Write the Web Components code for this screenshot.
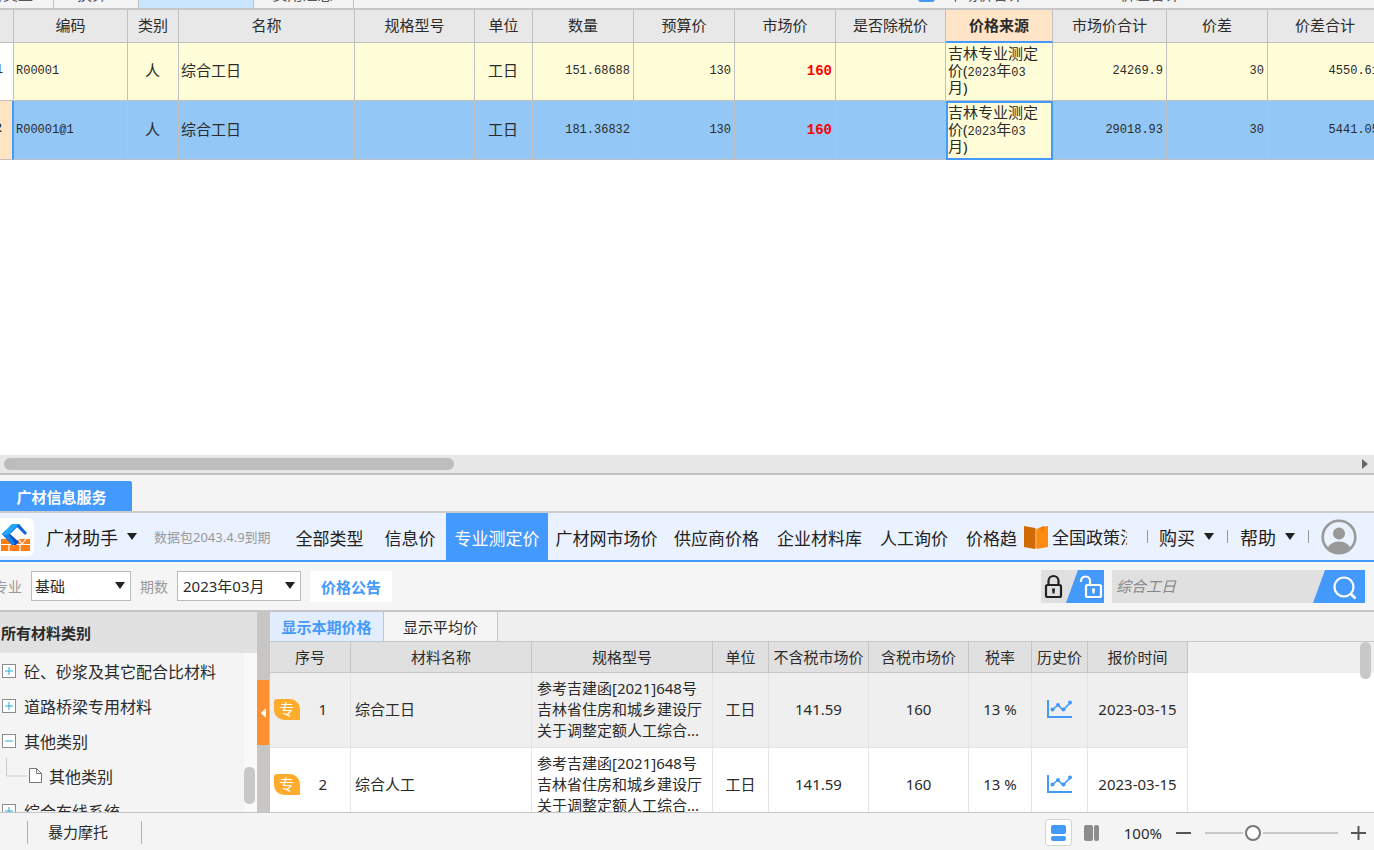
<!DOCTYPE html>
<html lang="zh-CN">
<head>
<meta charset="utf-8">
<title>广材信息服务</title>
<style>
html,body{height:100%;margin:0}
body{font-family:"Noto Sans","Noto Sans CJK SC",sans-serif;font-size:15px;color:#2b2b2b;background:#f4f4f4;overflow:hidden}
</style>
</head>
<body>
<cost-app></cost-app>
<script>
const BASE = `*{box-sizing:border-box}
button,input,select{font-family:inherit;font-size:inherit;color:inherit;margin:0}
button{border:0;background:none;padding:0;cursor:pointer}`;

function define(name, css, html) {
  customElements.define(name, class extends HTMLElement {
    constructor() {
      super();
      const t = document.createElement('template');
      t.innerHTML = `<style>${BASE}${css}</style>${typeof html === 'function' ? html(this) : html}`;
      this.attachShadow({ mode: 'open' }).appendChild(t.content.cloneNode(true));
    }
  });
}

/* Small downward triangle */
define('drop-arrow', `:host{display:block;width:0;height:0;border:5px solid transparent;border-top:7px solid #222;border-bottom:0}`, '');

/* Upper tab strip, scrolled so that only its lower edge shows */
define('sheet-tabs', `
:host{display:flex;flex:none;height:10px;overflow:hidden;background:#f3f3f3;border-bottom:2px solid #c6c6c6;align-items:flex-end;line-height:16px;color:#555;white-space:nowrap}
.tab{height:24px;flex:none;border-right:1px solid #c2c2c2;text-align:center;padding-top:2px}
.tab.on{background:#cae6ff}
.a{width:54px;display:flex;justify-content:flex-end;padding-right:20px}.b{width:85px;padding-right:8px}.c{width:115px}.d{width:100px;padding-right:2px}
.sp{flex:1}
.sum{display:flex;height:24px;width:456px;flex:none;padding-top:2px}
.box{width:17px;height:16px;background:#4499fd;border-radius:3px;margin-right:13px}
.sum span{width:172px}`,
`<span class="tab a">材料类型</span><span class="tab b">换算</span><span class="tab c on"></span><span class="tab d">费用汇总</span>
<span class="sp"></span><div class="sum"><i class="box"></i><span>市场价合计:</span><span>价差合计:</span></div>`);

/* Main quantity grid */
const COLS = [['',31],['编码',114],['类别',51],['名称',176],['规格型号',120],['单位',58],['数量',101],['预算价',101],['市场价',101],['是否除税价',110],['价格来源',107],['市场价合计',114],['价差',101],['价差合计',115]];
const SRC = '吉林专业测定<br>价(<span class="n">2023</span>年<span class="n">03</span><br>月)';
const ROWS = [
 ['1','R00001','人','综合工日','','工日','151.68688','130','160','',SRC,'24269.9','30','4550.61'],
 ['2','R00001@1','人','综合工日','','工日','181.36832','130','160','',SRC,'29018.93','30','5441.05']];
const KIND = ['idx','code','mid','txt','txt','mid','num','num','red','txt','src','num','num','num'];
define('quota-grid', `
:host{display:block;flex:1;min-height:0;overflow:hidden;background:#fff}
table{border-collapse:separate;border-spacing:0;table-layout:fixed;width:1400px;margin-left:-17px;line-height:18px}
th{height:33px;background:#e8e8e8;font-weight:400;padding:0 0 2px}
th,td{border-right:1px solid #c0c0c0;border-bottom:1px solid #c0c0c0}
td{height:58px;padding:0 3px 3px 2px;background:#fffcd8}
tr.on td{height:59px;background:#92c7f6}
.mid{text-align:center}
.num{text-align:right}
.code,.num,.n,.idx{font-family:"Liberation Mono",monospace;font-size:12px}
.code,.num,.red{padding-bottom:1px}
.n{line-height:1}
.red{text-align:right;font:bold 14px "Liberation Mono",monospace;color:#f00}
td.src{line-height:17px;padding-bottom:2px}
td.idx{background:#fff;text-align:right;padding-right:10px}
tr.on td.idx{background:#ffe4c4;border-right:2px solid #4499fd;font-weight:700}
th.on{background:#ffe4c8;font-weight:700;border-bottom:2px solid #4499fd}
tr.on td.src{background:#fffcd8;border:2px solid #4499fd;padding:0 0 2px}`,
`<table><colgroup>${COLS.map(c=>`<col style="width:${c[1]}px">`).join('')}</colgroup>
<thead><tr>${COLS.map(c=>`<th scope="col"${c[0]==='价格来源'?' class="on"':''}>${c[0]}</th>`).join('')}</tr></thead>
<tbody>${ROWS.map((r,i)=>`<tr${i?' class="on"':''}>${r.map((v,j)=>`<td class="${KIND[j]}">${v}</td>`).join('')}</tr>`).join('')}</tbody></table>`);

define('h-scroll', `
:host{display:flex;flex:none;height:20px;background:#e7e7e7;border-bottom:2px solid #c2c2c2;align-items:center;padding:0 6px 0 4px;justify-content:space-between}
.thumb{width:450px;height:12px;border-radius:6px;background:#bdbdbd}
.arrow{border:5px solid transparent;border-left:6px solid #666;border-right:0}`,
`<div class="thumb"></div><i class="arrow"></i>`);

define('dock-tabs', `
:host{display:flex;flex:none;height:38px;background:#f4f4f4;border-bottom:2px solid #ccc;align-items:flex-end}
button{width:132px;height:30px;background:#4499fd;color:#fff;font-weight:700;border-radius:0 2px 0 0;padding-right:9px}`,
`<button><slot></slot></button>`);

define('assistant-bar', `
:host{display:flex;flex:none;height:49px;background:#eaf1ff;border-bottom:2px solid #4499fd;align-items:center;color:#1d1d1d;white-space:nowrap}
.logo{width:34px;height:38px;background:#fff;border-radius:0 6px 6px 0;margin-right:12px;flex:none}
.brand,.menu{display:flex;align-items:center;gap:9px;font-size:18px;flex:none}
.note{font-size:13px;color:#999;margin-left:17px;width:131px;flex:none}
nav{flex:1;min-width:0;overflow:hidden;display:grid;grid-template-columns:89px 72px 102px 117px 103px 103px 86px 90px;align-self:stretch;font-size:17px}
nav a{color:#222;text-decoration:none;text-align:center;line-height:51px}
nav a.on{background:#4499fd;color:#fff}
nav a:last-child{text-align:left;padding-left:9px}
.book{width:27px;height:26px;flex:none;margin:0 3px 0 4px}
.policy{width:75px;overflow:hidden;font-size:17px;flex:none;color:#222;text-decoration:none}
.sep{width:1px;height:13px;background:#999;flex:none}
.s1{margin:0 11px 0 20px}.s2,.s3{margin:0 12px 0 13px}
.user{width:36px;height:36px;margin-right:17px;flex:none}
svg{display:block}`,
`<svg class="logo" viewBox="0 0 34 38"><path d="M1 21h6l6 6v6H1zM18 21h12v12H10z" fill="#ff7f16"/><path d="M0 26.500h31M9 27v7M20 27v7M18 21l4 5 4-5" stroke="#fff" stroke-width="1.200" fill="none"/><path d="M12 6h8L10 16H2z" fill="#22b4ff"/><path d="M2 16h8l9 8-3 3h-4z" fill="#0a50c8"/><path d="M2 16l4-4 9 14-3 1z" fill="#1583ea"/><path d="M13 6h6l8 9-2 2-8-8-7 7z" fill="#1268d8"/><path d="M12 6h7L8 17H2z" fill="#22a8fa"/></svg>
<button class="brand">广材助手 <drop-arrow></drop-arrow></button>
<span class="note">数据包2043.4.9到期</span>
<nav><a href="#">全部类型</a><a href="#">信息价</a><a href="#" class="on">专业测定价</a><a href="#">广材网市场价</a><a href="#">供应商价格</a><a href="#">企业材料库</a><a href="#">人工询价</a><a href="#">价格趋势</a></nav>
<svg class="book" viewBox="0 0 27 26"><path d="M2 2l11 2v21L2 23z" fill="#d06a04"/><path d="M13 4l2 1v19l-2 1z" fill="#f6a04a"/><path d="M15 5l4-2 7-1v21l-11 2z" fill="#ff8a10"/><path d="M19 3l3-1v6l-1-1-2 1z" fill="#f07c08"/></svg>
<a href="#" class="policy">全国政策法规</a>
<i class="sep s1"></i><button class="menu">购买 <drop-arrow></drop-arrow></button>
<i class="sep s2"></i><button class="menu">帮助 <drop-arrow></drop-arrow></button>
<i class="sep s3"></i>
<svg class="user" viewBox="0 0 36 36"><defs><clipPath id="c"><circle cx="18" cy="18" r="16"/></clipPath></defs><circle cx="18" cy="18" r="16.3" fill="#eaf1ff" stroke="#999" stroke-width="2.6"/><circle cx="18" cy="14.500" r="6" fill="#999"/><ellipse cx="18" cy="31" rx="11.500" ry="8.500" fill="#999" clip-path="url(#c)"/></svg>`);

define('filter-bar', `
:host{display:flex;flex:none;height:50px;background:#f5f5f5;border-bottom:2px solid #c6c6c6;align-items:center}
label{font-size:14px;color:#999}
.clip{width:22px;overflow:hidden;display:flex;justify-content:flex-end;white-space:nowrap;margin-right:9px}
.pick{position:relative;height:30px;display:block}
.pick drop-arrow{position:absolute;right:6px;top:11px;pointer-events:none}
select{appearance:none;width:100%;height:100%;border:1px solid #bbb;border-radius:0;background:#fff;padding:0 3px}
.p1{width:100px;margin-right:9px}.p2{width:124px;margin:0 9px}
.p2 select{padding-left:5px}
.pub{width:82px;height:31px;background:#fff;color:#4499fd;font-weight:700}
.lock{margin-left:auto;margin-right:8px;width:63px;height:33px}
.find{display:flex;width:253px;height:33px;background:#e0e0e0;margin-right:9px}
input{flex:1;min-width:0;border:0;background:none;padding:0 4px;font-style:italic;outline:0}
input::placeholder{color:#888;opacity:1}
.go{width:52px;height:33px}
svg{display:block}`,
`<div class="clip"><label for="major">专业</label></div>
<span class="pick p1"><select id="major"><option>基础</option></select><drop-arrow></drop-arrow></span>
<label for="period">期数</label>
<span class="pick p2"><select id="period"><option>2023年03月</option></select><drop-arrow></drop-arrow></span>
<button class="pub">价格公告</button>
<button class="lock" aria-label="锁定"><svg viewBox="0 0 63 33" width="63" height="33"><path d="M0 0h63v33H0z" fill="#e0e0e0"/><path d="M37 0h26v33H25z" fill="#4499fd"/><g fill="none" stroke="#222" stroke-width="2.2"><rect x="5" y="15" width="15" height="12" rx="1.500"/><path d="M7.500 15v-4a5 5 0 0 1 10 0v4"/></g><path d="M11 18.500h3l-.5 5h-2z" fill="#222"/><g fill="none" stroke="#fff" stroke-width="2.2"><rect x="45" y="15" width="15" height="12" rx="1.500"/><path d="M40 12v-1a4.500 4.500 0 0 1 9 0v4"/></g><path d="M51 18.500h3l-.5 5h-2z" fill="#fff"/></svg></button>
<div class="find"><input type="text" aria-label="搜索" placeholder="综合工日"><button class="go" aria-label="查找"><svg viewBox="0 0 52 33" width="52" height="33"><path d="M12 0h40v33H0z" fill="#4499fd"/><circle cx="31" cy="17" r="9.500" fill="none" stroke="#fff" stroke-width="2.2"/><path d="M37.500 23.500l5 5" stroke="#fff" stroke-width="2.600"/></svg></button></div>`);

/* Tree row: sign="plus|minus|leaf" */
define('tree-row', `
:host{display:flex;height:35px;align-items:center;gap:8px;font-size:16px;padding-left:2px;white-space:nowrap}
svg{display:block;flex:none}
.leaf{margin-right:-3px}`,
el => {
  const s = el.getAttribute('sign');
  return (s === 'leaf'
   ? `<svg class="leaf" width="42" height="35" viewBox="0 0 42 35"><path d="M4.500 -5V18h20" fill="none" stroke="#ccc"/><path d="M27.500 10.500h7l5 5v9h-12zM34.500 10.500v5h5" fill="#fff" stroke="#777"/></svg>`
   : `<svg width="14" height="14" viewBox="0 0 14 14"><rect x=".5" y=".5" width="13" height="13" fill="#fff" stroke="#8c8c8c"/><path d="${s==='plus'?'M7 3v8M3 7h8':'M3 7h8'}" stroke="#22acd8" stroke-width="1"/></svg>`) + '<slot></slot>';
});
define('category-tree', `
:host{display:flex;flex-direction:column;flex:none;width:257px;overflow:hidden;background:#f4f4f4}
h2{margin:0;height:41px;flex:none;background:#e1e1e1;font-size:15px;font-weight:700;line-height:42px;padding-left:1px}
.body{flex:1;min-height:0;display:flex;overflow:hidden}
.list{flex:1;min-width:0}
.track{width:13px;background:#f9f9f9;padding-top:114px}
.thumb{width:11px;height:37px;border-radius:5px;background:#c8c8c8}`,
`<h2>所有材料类别</h2><div class="body"><div class="list">
<tree-row sign="plus">砼、砂浆及其它配合比材料</tree-row><tree-row sign="plus">道路桥梁专用材料</tree-row><tree-row sign="minus">其他类别</tree-row><tree-row sign="leaf">其他类别</tree-row><tree-row sign="plus">综合布线系统</tree-row>
</div><div class="track"><div class="thumb"></div></div></div>`);

define('pane-splitter', `
:host{display:block;flex:none;width:13px;background:#c8c6c4;padding-top:68px}
button{display:flex;width:12px;height:65px;background:#ff9030;align-items:center;justify-content:center}
i{border:5px solid transparent;border-right:5px solid #fff;border-left:0}`,
`<button aria-label="折叠"><i></i></button>`);

const PC = [['序号',81],['材料名称',181],['规格型号',181],['单位',56],['不含税市场价',100],['含税市场价',100],['税率',63],['历史价',56],['报价时间',100]];
const CHART = `<svg width="26" height="20" viewBox="0 0 26 20"><path d="M1 1v17h24" fill="none" stroke="#4499fd" stroke-width="2"/><path d="M5 11l6-5 5 5 7-7" fill="none" stroke="#4499fd" stroke-width="1.600"/><g fill="#4499fd"><circle cx="5.500" cy="10.500" r="2"/><circle cx="11" cy="6" r="2"/><circle cx="16.500" cy="10.500" r="2"/><circle cx="23" cy="3.500" r="2"/></g></svg>`;
const prow = (n,name) => `<tr><td class="no"><div><b>专</b><span>${n}</span></div></td><td>${name}</td><td class="spec">参考吉建函[2021]648号<br>吉林省住房和城乡建设厅<br>关于调整定额人工综合...</td><td class="m">工日</td><td class="m">141.59</td><td class="m">160</td><td class="m">13 %</td><td class="m">${CHART}</td><td class="m">2023-03-15</td></tr>`;
define('price-table', `
:host{display:flex;flex-direction:column;flex:1;min-width:0;overflow:hidden;background:#fff;white-space:nowrap}
.tabs{display:flex;flex:none;height:30px;background:#f0f0f0;border-bottom:1px solid #c6c6c6}
.tabs button{width:114px;border-right:1px solid #c6c6c6;background:#f5f5f5}
.tabs .on{background:#e2eeff;color:#4499fd;font-weight:700}
.body{flex:1;min-height:0;overflow:hidden;display:flex;background:linear-gradient(#efefef 31px,#fff 31px)}
table{border-collapse:separate;border-spacing:0;table-layout:fixed;width:918px;flex:none}
th{height:31px;background:#e0e0e0;border-right:1px solid #c6c6c6;border-bottom:1px solid #c6c6c6;font-weight:400;padding:0 0 2px}
td{height:75px;border-right:1px solid #e4e4e4;border-bottom:1px solid #e4e4e4;padding:0 4px 2px;line-height:21px}
tr:first-child td{background:#efefef}
td.spec{padding:0 0 1px 5px}
td.m{text-align:center;padding:0 0 2px}
.m svg{display:block;margin:auto}
.no div{display:flex;align-items:center}
.no b{width:27px;height:21px;border-radius:3px 10px 1px 10px;background:#ffab2e;color:#fff;font-weight:400;text-align:center;line-height:20px}
.no span{width:49px;text-align:center}
.bar{margin-left:auto;width:14px}
.bar i{display:block;width:11px;height:37px;border-radius:6px;background:#c8c8c8}`,
`<div class="tabs"><button class="on">显示本期价格</button><button>显示平均价</button></div>
<div class="body"><table><colgroup>${PC.map(c=>`<col style="width:${c[1]}px">`).join('')}</colgroup><thead><tr>${PC.map(c=>`<th scope="col">${c[0]}</th>`).join('')}</tr></thead><tbody>${prow(1,'综合工日')}${prow(2,'综合人工')}</tbody></table><div class="bar"><i></i></div></div>`);

define('status-bar', `
:host{display:flex;flex:none;height:38px;background:#f4f4f4;border-top:1px solid #c6c6c6;align-items:center;padding:2px 7px 0 27px}
.org{border:1px solid #aab2bb;border-width:0 1px;width:115px;height:23px;line-height:22px;padding-left:20px;margin-right:auto}
.view{width:27px;height:27px;display:flex;align-items:center;justify-content:center;margin-right:6px}
.view.on{background:#fff;border:1px solid #d4d4d4;border-radius:3px}
output{width:51px;text-align:right;margin-right:14px}
.step{width:16px;height:16px}
svg{display:block}
input{appearance:none;width:133px;height:18px;margin:0 13px;background:linear-gradient(#c8c8c8,#c8c8c8) center/100% 2px no-repeat}
input::-webkit-slider-thumb{appearance:none;width:16px;height:16px;border-radius:50%;border:2px solid #777;background:#fff;box-shadow:0 0 0 2px #f4f4f4}`,
`<span class="org">暴力摩托</span>
<button class="view on" aria-label="上下布局"><svg width="15" height="16" viewBox="0 0 15 16"><g fill="#4499fd"><rect width="15" height="9" rx="2"/><rect y="11" width="15" height="5" rx="2"/></g></svg></button>
<button class="view" aria-label="左右布局"><svg width="15" height="16" viewBox="0 0 15 16"><g fill="#8c8c8c"><rect width="9" height="16" rx="2"/><rect x="10" width="5" height="16" rx="2"/></g></svg></button>
<output for="zoom">100%</output>
<button class="step" aria-label="缩小"><svg width="16" height="16"><path d="M0 8h15" stroke="#555" stroke-width="2"/></svg></button>
<input id="zoom" type="range" min="0" max="100" value="34" aria-label="缩放">
<button class="step" aria-label="放大"><svg width="16" height="16"><path d="M0 8h15M7.500 1v14" stroke="#555" stroke-width="2"/></svg></button>`);

define('cost-app', `
:host{display:flex;flex-direction:column;height:100vh}
.work{display:flex;flex:none;height:200px}`,
`<sheet-tabs></sheet-tabs><quota-grid></quota-grid><h-scroll></h-scroll>
<dock-tabs>广材信息服务</dock-tabs><assistant-bar></assistant-bar><filter-bar></filter-bar>
<div class="work"><category-tree></category-tree><pane-splitter></pane-splitter><price-table></price-table></div>
<status-bar></status-bar>`);
</script>
</body>
</html>
